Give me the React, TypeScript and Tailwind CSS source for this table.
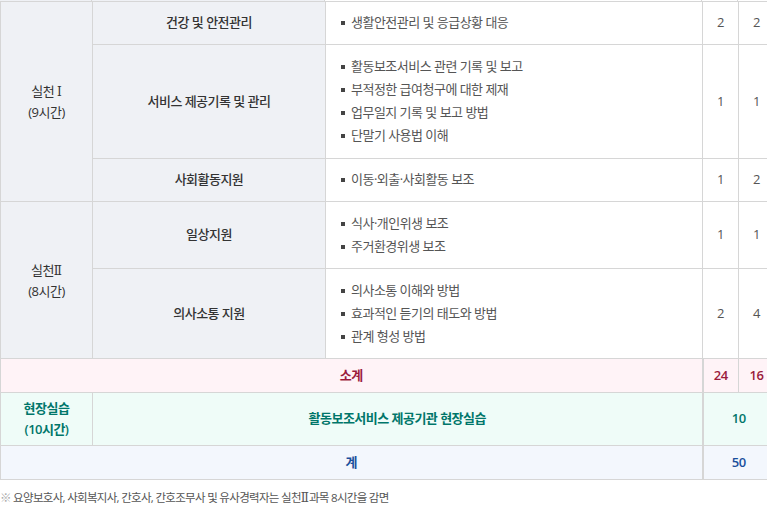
import React from 'react';

const Bullets = ({ items }: { items: string[] }) => (
  <ul className="flex flex-col">
    {items.map((t) => (
      <li key={t} className="flex items-center h-[23px] text-[#555]">
        <span className="w-[4px] h-[4px] bg-[#444] mr-[6px] shrink-0" />
        {t}
      </li>
    ))}
  </ul>
);

const Roman = ({ n }: { n: string }) => (
  <span className="font-['DejaVu_Serif','Noto_Sans_CJK_KR',serif] text-[12px] tracking-normal">{n}</span>
);

const rows = [
  { topic: '건강 및 안전관리', items: ['생활안전관리 및 응급상황 대응'], a: '2', b: '2', h: 'h-[43px]' },
  {
    topic: '서비스 제공기록 및 관리',
    items: ['활동보조서비스 관련 기록 및 보고', '부적정한 급여청구에 대한 제재', '업무일지 기록 및 보고 방법', '단말기 사용법 이해'],
    a: '1',
    b: '1',
    h: 'h-[114px]',
  },
  { topic: '사회활동지원', items: ['이동·외출·사회활동 보조'], a: '1', b: '2', h: 'h-[43px]' },
];

const rows2 = [
  { topic: '일상지원', items: ['식사·개인위생 보조', '주거환경위생 보조'], a: '1', b: '1', h: 'h-[67px]' },
  { topic: '의사소통 지원', items: ['의사소통 이해와 방법', '효과적인 듣기의 태도와 방법', '관계 형성 방법'], a: '2', b: '4', h: 'h-[90px]' },
];

export default function App() {
  const cell = 'border border-[#d6d6d6]';
  const gray = 'bg-[#eff1f5]';

  const renderRows = (list: typeof rows, group: React.ReactNode) =>
    list.map((r, i) => (
      <tr key={r.topic} className={r.h}>
        {i === 0 && group}
        <td className={`${cell} ${gray} text-center text-[#333] font-medium`}>{r.topic}</td>
        <td className={`${cell} bg-white pl-[15px]`}>
          <Bullets items={r.items} />
        </td>
        <td className={`${cell} bg-white text-center text-[#555]`}>{r.a}</td>
        <td className={`${cell} bg-white text-center text-[#555]`}>{r.b}</td>
      </tr>
    ));

  return (
    <div className="w-[767px] h-[507px] overflow-hidden bg-white font-['Open_Sans','Noto_Sans_CJK_KR',sans-serif] text-[13px] tracking-[-0.04em]">
      <div className="flex h-px">
        <div className="w-[92px] bg-[#eff1f5] border-r border-[#d6d6d6]" />
        <div className="w-[233px] bg-[#eff1f5] border-r border-[#d6d6d6]" />
        <div className="w-[377px] border-r border-[#d6d6d6]" />
        <div className="w-[36px] border-r border-[#d6d6d6]" />
      </div>
      <table className="w-[774px] table-fixed border-collapse">
        <colgroup>
          <col className="w-[92px]" />
          <col className="w-[233px]" />
          <col className="w-[377px]" />
          <col className="w-[36px]" />
          <col className="w-[36px]" />
        </colgroup>
        <tbody>
          {renderRows(
            rows,
            <td rowSpan={3} className={`${cell} ${gray} text-center text-[#333] leading-[20px]`}>
              실천 <Roman n="Ⅰ" />
              <br />(9시간)
            </td>
          )}
          {renderRows(
            rows2,
            <td rowSpan={2} className={`${cell} ${gray} text-center text-[#333] leading-[20px]`}>
              실천<Roman n="Ⅱ" />
              <br />(8시간)
            </td>
          )}
          <tr className="h-[34px] bg-[#fff3f7] text-[#9b1b3c] font-semibold">
            <td colSpan={3} className={`${cell} border-r-2 text-center`}>소계</td>
            <td className={`${cell} text-center`}>24</td>
            <td className={`${cell} text-center`}>16</td>
          </tr>
          <tr className="h-[53px] bg-[#effcf8] text-[#00766a] font-semibold">
            <td className={`${cell} text-center leading-[21px]`}>
              현장실습<br />(10시간)
            </td>
            <td colSpan={2} className={`${cell} border-r-2 text-center`}>활동보조서비스 제공기관 현장실습</td>
            <td colSpan={2} className={`${cell} text-center`}>10</td>
          </tr>
          <tr className="h-[34px] bg-[#f3f7fd] text-[#1a4f9c] font-semibold">
            <td colSpan={3} className={`${cell} border-r-2 text-center`}>계</td>
            <td colSpan={2} className={`${cell} text-center`}>50</td>
          </tr>
        </tbody>
      </table>
      <p className="mt-[9px] text-[11.5px] text-[#555] tracking-[-0.06em]">
        <span className="text-[#aaa]">※</span> 요양보호사, 사회복지사, 간호사, 간호조무사 및 유사경력자는 실천<Roman n="Ⅱ" />과목 8시간을 감면
      </p>
    </div>
  );
}
